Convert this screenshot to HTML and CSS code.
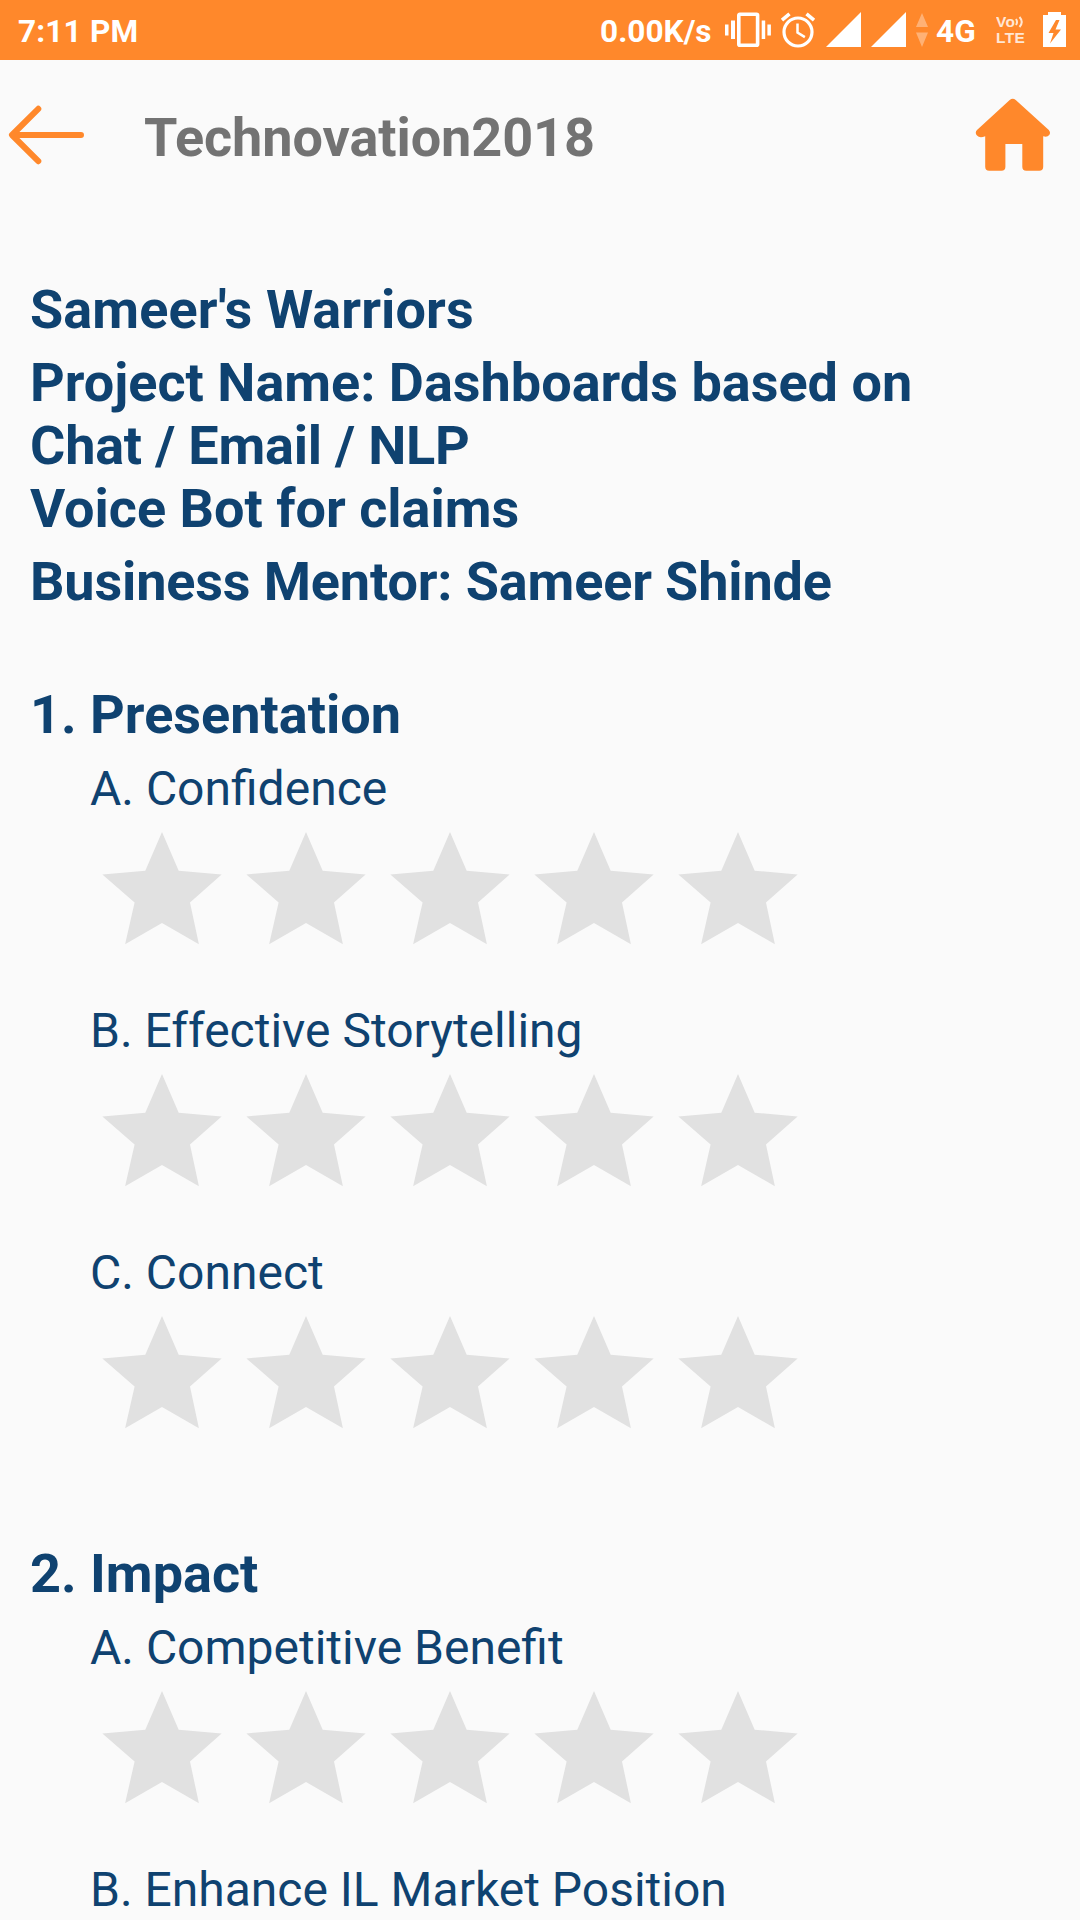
FILE: index.html
```html
<!DOCTYPE html>
<html lang="en">
<head>
    <meta charset="UTF-8">
    <meta name="viewport" content="width=device-width, initial-scale=1.0">
    <title>Technovation2018</title>
    <link rel="stylesheet" href="styles.css">
</head>
<body>
    <svg class="defs" width="0" height="0">
        <symbol id="star" viewBox="0 2 144 142">
            <path d="M72 16 L88.7 54.7 L131.6 58.4 L100 86.6 L108.9 128.3 L72 107 L35.1 128.3 L44.6 86.6 L12.4 58.4 L55.3 54.7 Z"/>
        </symbol>
    </svg>

    <div class="status-bar">
        <span class="time">7:11 PM</span>
        <span class="speed">0.00K/s</span>
        <svg class="vibrate" width="48" height="36" viewBox="0 0 48 36">
            <path d="M1 12.5h3.5v11H1z M7 8.5h4v18.5H7z M37.7 8.5h3.5v18.5h-3.5z M43.4 12.5h3.5v11h-3.5z"/>
            <rect x="14.8" y="2.2" width="18.8" height="31" rx="1" fill="none" stroke="#fff" stroke-width="3.6"/>
        </svg>
        <svg class="alarm" width="36" height="36" viewBox="0 0 36 36" fill="none" stroke="#fff">
            <circle cx="18" cy="20" r="14" stroke-width="3.2"/>
            <path d="M2 8.2 L9.5 1.8 M26.5 1.8 L34 8.2" stroke-width="3.6"/>
            <path d="M17.5 11.5v9l7.4 4.6" stroke-width="2.5"/>
        </svg>
        <svg class="signal" width="35" height="35" viewBox="0 0 35 35"><path d="M35 0v35H0z"/></svg>
        <svg class="signal" width="35" height="35" viewBox="0 0 35 35"><path d="M35 0v35H0z"/></svg>
        <svg class="data" width="12" height="34" viewBox="0 0 12 34"><path d="M6 0l6 14H0z M0 19.5h12L6 34z"/></svg>
        <span class="network">4G</span>
        <span class="volte">
            <span class="volte-row">Vo<svg width="9" height="12" viewBox="0 0 9 12" fill="none" stroke="#fff" stroke-width="2"><path d="M1 3q2 3 0 6 M4.500 1q4.500 5 0 10"/></svg></span>
            <span class="volte-row">LTE</span>
        </span>
        <svg class="battery" width="23" height="35" viewBox="0 0 23 35">
            <path fill-rule="evenodd" d="M5 0h13v3h5v32H0V3h5z M13 8L5.500 21h5L7 31.500L18 17.500h-5.500L16.500 8z"/>
        </svg>
    </div>

    <div class="header">
        <svg class="back" width="80" height="64" viewBox="0 0 80 64">
            <path d="M33.300 5.800L7 32l26.300 26.200M7.500 32H76"/>
        </svg>
        <h1>Technovation2018</h1>
        <svg class="home" width="76" height="74" viewBox="0 0 76 74">
            <path d="M34.700 2q3-2.700 6 0L73.800 32q2.200 2.500.4 5t-6 1.300V68.700q0 4-4 4H51.300q-4 0-4-4V46H30.400V68.700q0 4-4 4H14.200q-4 0-4-4V38.300Q4.500 40.500 2 37.500t0-5.500z"/>
        </svg>
    </div>

    <div class="content">
        <div class="team">
            <p class="team-name">Sameer's Warriors</p>
            <p>Project Name: Dashboards based on<br><span class="project">Chat / Email / NLP</span><br>Voice Bot for claims</p>
            <p class="mentor">Business Mentor: Sameer Shinde</p>
        </div>

        <div class="section">
            <h2>1. Presentation</h2>
            <div class="question">
                <h3>A. Confidence</h3>
                <div class="stars">
                    <svg><use href="#star"/></svg><svg><use href="#star"/></svg><svg><use href="#star"/></svg><svg><use href="#star"/></svg><svg><use href="#star"/></svg>
                </div>
            </div>
            <div class="question">
                <h3>B. Effective Storytelling</h3>
                <div class="stars">
                    <svg><use href="#star"/></svg><svg><use href="#star"/></svg><svg><use href="#star"/></svg><svg><use href="#star"/></svg><svg><use href="#star"/></svg>
                </div>
            </div>
            <div class="question">
                <h3>C. Connect</h3>
                <div class="stars">
                    <svg><use href="#star"/></svg><svg><use href="#star"/></svg><svg><use href="#star"/></svg><svg><use href="#star"/></svg><svg><use href="#star"/></svg>
                </div>
            </div>
        </div>

        <div class="section">
            <h2>2. Impact</h2>
            <div class="question">
                <h3>A. Competitive Benefit</h3>
                <div class="stars">
                    <svg><use href="#star"/></svg><svg><use href="#star"/></svg><svg><use href="#star"/></svg><svg><use href="#star"/></svg><svg><use href="#star"/></svg>
                </div>
            </div>
            <div class="question">
                <h3>B. Enhance IL Market Position</h3>
            </div>
        </div>
    </div>
</body>
</html>
```

FILE: styles.css
```css
* {
    box-sizing: border-box;
}
body {
    margin: 0;
    height: 1920px;
    overflow: hidden;
    background-color: #fafafa;
    color: #0f4270;
    font-family: Roboto, sans-serif;
}
h1, h2, h3, p {
    margin: 0;
}
svg {
    display: block;
    flex: none;
}
.defs {
    display: none;
}
.status-bar {
    display: flex;
    align-items: flex-start;
    height: 60px;
    padding: 12px 14px 0 18px;
    background-color: #ff882b;
    color: #fff;
    fill: #fff;
    font-size: 31.6px;
    font-weight: bold;
    line-height: 39px;
    white-space: nowrap;
}
.time {
    letter-spacing: 0.15px;
}
.speed {
    width: 124px;
    margin-left: auto;
}
.alarm {
    margin-left: 8px;
}
.signal {
    margin-left: 10px;
}
.data {
    margin: 1px 0 0 10px;
    opacity: 0.35;
}
.network {
    width: 60px;
    margin-left: 8px;
}
.volte {
    width: 36px;
    margin-top: 2px;
    font-family: "Liberation Sans", sans-serif;
    font-size: 15.5px;
    line-height: 16px;
    letter-spacing: 0.4px;
    opacity: 0.8;
}
.volte-row {
    display: flex;
    align-items: center;
    height: 16px;
}
.battery {
    margin-left: 11px;
}
.header {
    display: flex;
    align-items: center;
    height: 218px;
    padding: 0 29px 69px 5px;
}
.back {
    fill: none;
    stroke: #ff882b;
    stroke-width: 6;
    stroke-linecap: round;
    stroke-linejoin: round;
}
.header h1 {
    flex: 1;
    margin-left: 59px;
    padding-top: 6px;
    color: #737373;
    font-size: 54px;
    line-height: 64px;
    letter-spacing: -0.07px;
}
.home {
    fill: #ff882b;
}
.content {
    padding-left: 30px;
}
.team {
    display: flex;
    flex-direction: column;
    gap: 10px;
    margin-bottom: 70px;
    font-size: 54px;
    font-weight: bold;
    line-height: 63px;
}
.team-name {
    letter-spacing: 0.1px;
}
.project {
    letter-spacing: -0.2px;
}
.mentor {
    letter-spacing: -0.15px;
}
.section {
    margin-bottom: 98px;
}
.section h2 {
    margin-bottom: 14px;
    font-size: 54px;
    line-height: 63px;
}
.question {
    margin: 0 0 42px 60px;
}
.section:last-child,
.section:last-child .question:last-child {
    margin-bottom: 0;
}
.question h3 {
    font-size: 48px;
    font-weight: normal;
    line-height: 58px;
}
.stars {
    display: flex;
    fill: #e1e1e1;
}
.stars svg {
    width: 144px;
    height: 142px;
}
```
